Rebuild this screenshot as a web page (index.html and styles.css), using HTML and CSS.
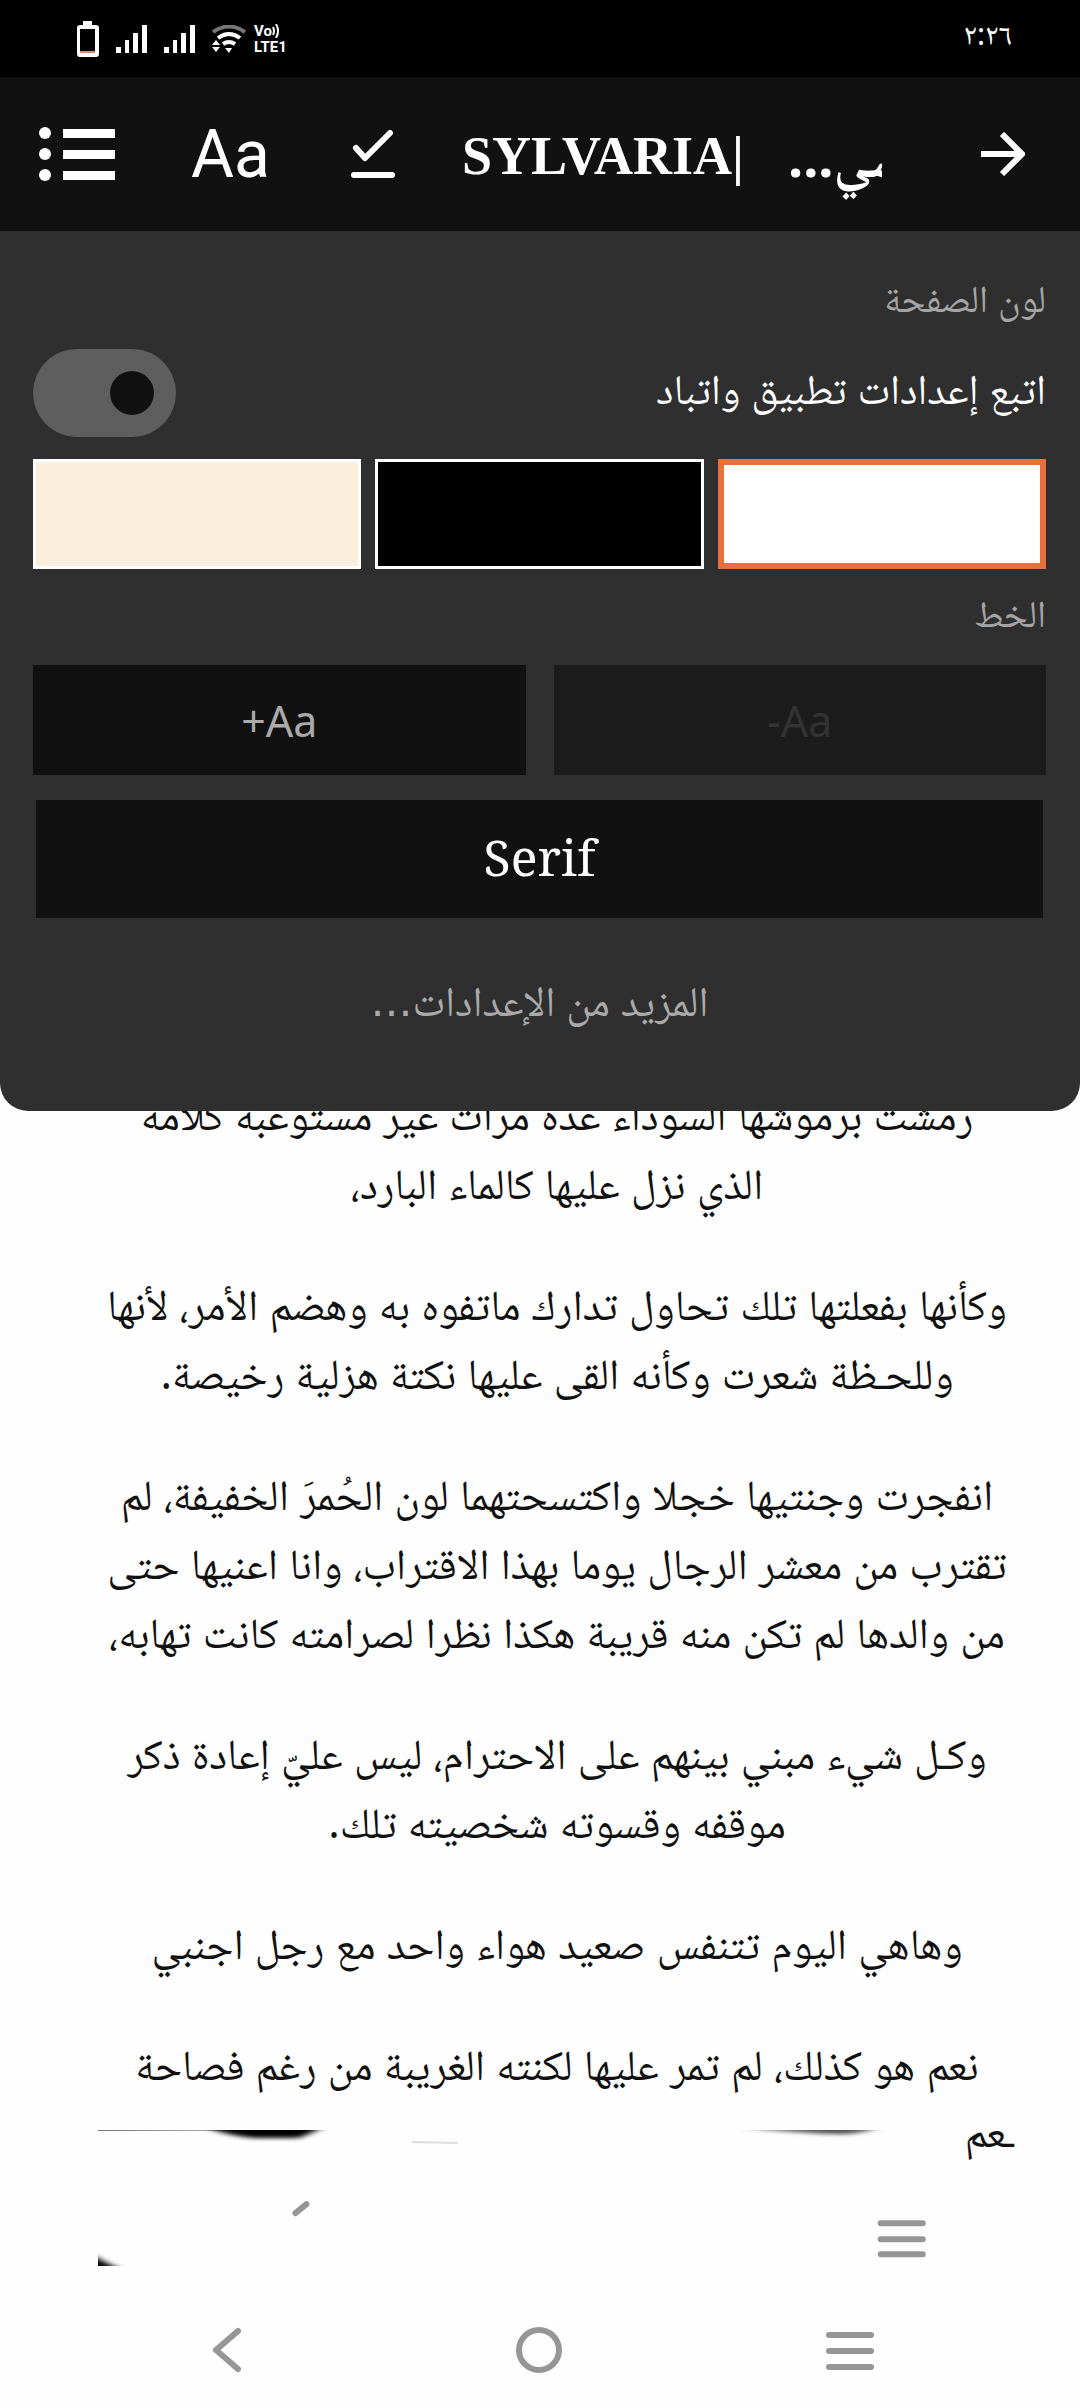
FILE: index.html
```html
<!DOCTYPE html>
<html lang="ar" dir="rtl">
<head>
    <meta charset="UTF-8">
    <meta name="viewport" content="width=device-width, initial-scale=1.0">
    <title>SYLVARIA</title>
    <link rel="stylesheet" href="styles.css">
</head>
<body>
    <div class="status-bar">
        <span class="clock">٢:٢٦</span>
        <div class="status-icons">
            <svg width="22" height="36" viewBox="0 0 22 36"><path d="M6 0h9v4h4q3 0 3 3v26q0 3-3 3H3q-3 0-3-3V7q0-3 3-3h3z" fill="#fff"/><path d="M3 8h15v22H3z" fill="#000"/><path d="M3 30h15v2H3z" fill="#d98a76"/></svg>
            <svg width="31" height="28" viewBox="0 0 31 28" fill="#fff"><path d="M0 22h5v6H0zM9 15h4v13H9zM17 8h5v20h-5zM26 0h5v28h-5z"/></svg>
            <svg width="31" height="28" viewBox="0 0 31 28" fill="#fff"><path d="M0 22h5v6H0zM9 15h4v13H9zM17 8h5v20h-5zM26 0h5v28h-5z"/></svg>
            <svg width="34" height="28" viewBox="0 0 34 28"><path d="M1 7Q17-4 33 7" fill="none" stroke="#777" stroke-width="4"/><path d="M6 13q11-8 22 0M11 19q6-4 12 0" fill="none" stroke="#fff" stroke-width="4"/><path d="M13 23h7l-3 5zM0 20l4-5 4 5zM0 22h8l-4 5z" fill="#fff"/></svg>
            <div class="volte">
                <span>Vo<svg width="8" height="14" viewBox="0 0 8 14"><path d="M1 3q2 4 0 8M4 0q4 7 0 14" fill="none" stroke="#fff" stroke-width="2"/></svg></span>
                <span>LTE1</span>
            </div>
        </div>
    </div>

    <header class="top-bar">
        <button class="icon-btn" aria-label="رجوع">
            <svg width="44" height="44" viewBox="0 0 44 44"><path d="M0 22h41M21 2l20 20-20 20" fill="none" stroke="#fff" stroke-width="6"/></svg>
        </button>
        <h1 class="title"><span class="title-end" dir="ltr"><span dir="rtl">سي...</span></span><span class="title-name" dir="ltr">SYLVARIA|</span></h1>
        <button class="icon-btn" aria-label="تم">
            <svg width="44" height="48" viewBox="0 0 44 48"><path d="M5 18l9 10L39 3M3 45h38" fill="none" stroke="#fff" stroke-width="6" stroke-linecap="round" stroke-linejoin="round"/></svg>
        </button>
        <button class="icon-btn text-btn">Aa</button>
        <button class="icon-btn" aria-label="الفصول">
            <svg width="76" height="54" viewBox="0 0 76 54" fill="#fff"><circle cx="6" cy="6" r="6"/><circle cx="6" cy="27" r="6"/><circle cx="6" cy="48" r="6"/><path d="M24 2h52v9H24zM24 23h52v9H24zM24 44h52v9H24z"/></svg>
        </button>
    </header>

    <section class="settings">
        <h2 class="label">لون الصفحة</h2>
        <div class="follow-row">
            <label for="follow">اتبع إعدادات تطبيق واتباد</label>
            <input class="toggle" type="checkbox" id="follow">
        </div>
        <div class="swatches">
            <input class="swatch white" type="radio" name="color" aria-label="أبيض" checked>
            <input class="swatch black" type="radio" name="color" aria-label="أسود">
            <input class="swatch sepia" type="radio" name="color" aria-label="بني داكن">
        </div>
        <h2 class="label">الخط</h2>
        <div class="sizes">
            <button class="size-btn" dir="ltr" disabled>-Aa</button>
            <button class="size-btn" dir="ltr">+Aa</button>
        </div>
        <button class="font-btn">Serif</button>
        <button class="more-btn">المزيد من الإعدادات<span class="dots">…</span></button>
    </section>

    <main class="story">
        <p>رمشت برموشها السوداء عدة مرات غير مستوعبة كلامه<br>الذي نزل عليها كالماء البارد،</p>
        <p>وكأنها بفعلتها تلك تحاول تدارك ماتفوه به وهضم الأمر، لأنها<br>وللحـظة شعرت وكأنه القى عليها نكتة هزلية رخيصة.</p>
        <p>انفجرت وجنتيها خجلا واكتسحتهما لون الحُمرَ الخفيفة، لم<br>تقترب من معشر الرجال يوما بهذا الاقتراب، وانا اعنيها حتى<br>من والدها لم تكن منه قريبة هكذا نظرا لصرامته كانت تهابه،</p>
        <p>وكـل شيء مبني بينهم على الاحترام، ليس عليّ إعادة ذكر<br>موقفه وقسوته شخصيته تلك.</p>
        <p>وهاهي اليوم تتنفس صعيد هواء واحد مع رجل اجنبي</p>
        <p>نعم هو كذلك، لم تمر عليها لكنته الغريبة من رغم فصاحة</p>
        <div class="last-row">
            <span class="cut-word">ـعم</span>
            <svg class="scene" viewBox="0 0 916 136">
                <defs>
                    <linearGradient id="edge"><stop offset="0" stop-color="#777"/><stop offset="1" stop-color="#bbb"/></linearGradient>
                    <filter id="soft" x="-20%" y="-100%" width="140%" height="300%"><feGaussianBlur stdDeviation="4 2"/></filter>
                </defs>
                <path d="M0 0h150v1H0z" fill="url(#edge)"/>
                <path d="M110-6h120q-18 10-30 14h-44q-24-2-46-10z" fill="#000" filter="url(#soft)"/>
                <path d="M142 0h68q-8 3-16 3h-36q-8 0-16-3z" fill="#000"/>
                <path d="M640-3h140q-20 7-38 7-40-1-102-7z" fill="#444" filter="url(#soft)"/>
                <path d="M313 12l46 1" stroke="#ddd" stroke-width="2"/>
                <path d="M-14 120q20 12 48 24h-48z" fill="#000" filter="url(#soft)"/>
                <path d="M197 83l11-9" stroke="#969696" stroke-width="6" stroke-linecap="round"/>
                <path d="M781 93h42M781 109h42M781 124h42" stroke="#969696" stroke-width="6" stroke-linecap="round"/>
            </svg>
        </div>
    </main>

    <nav class="nav-bar" dir="ltr">
        <button aria-label="رجوع"><svg width="48" height="48" viewBox="0 0 48 48"><path d="M34 5L12 24l22 19"/></svg></button>
        <button aria-label="الرئيسية"><svg width="48" height="48" viewBox="0 0 48 48"><circle cx="24" cy="24" r="20"/></svg></button>
        <button aria-label="التطبيقات"><svg width="48" height="48" viewBox="0 0 48 48"><path d="M3 9h42M3 25h42M3 41h42"/></svg></button>
    </nav>
</body>
</html>
```

FILE: styles.css
```css
* {
    box-sizing: border-box;
}
body {
    margin: 0;
    background-color: #fefefe;
    font-family: "Noto Sans", "Noto Naskh Arabic", "DejaVu Sans", sans-serif;
    color: #111;
}
button {
    padding: 0;
    border: none;
    background: none;
    color: inherit;
    font-family: inherit;
}
svg {
    display: block;
}
.status-bar {
    display: flex;
    justify-content: space-between;
    align-items: center;
    height: 77px;
    padding: 0 68px 0 77px;
    background-color: #000;
    color: #fff;
}
.clock {
    font-size: 30px;
}
.status-icons {
    display: flex;
    flex-direction: row-reverse;
    align-items: center;
    gap: 17px;
}
.volte {
    display: flex;
    flex-direction: column;
    direction: ltr;
    margin-left: -9px;
    font-family: Roboto, sans-serif;
    font-size: 15px;
    font-weight: bold;
    line-height: 16px;
}
.volte svg {
    display: inline-block;
    vertical-align: -2px;
}
.top-bar {
    display: flex;
    align-items: center;
    height: 154px;
    padding: 0 55px 0 39px;
    background-color: #111;
    color: #fff;
}
.title {
    display: flex;
    flex: 1;
    justify-content: space-between;
    align-items: center;
    margin: 0 99px 0 67px;
    padding-top: 4px;
    font-size: 54px;
    line-height: 110px;
    white-space: nowrap;
}
.title-name {
    font-family: "Liberation Serif", serif;
}
.title-end {
    width: 94px;
    overflow: hidden;
}
.text-btn {
    margin: 0 81px 0 76px;
    font-family: Roboto, sans-serif;
    font-size: 66px;
}
.settings {
    position: relative;
    display: flex;
    flex-direction: column;
    height: 880px;
    padding: 42px 34px 0 33px;
    border-radius: 0 0 28px 28px;
    background-color: #2f2f2f;
}
.label {
    margin: 0;
    font-size: 38px;
    font-weight: normal;
    line-height: 48px;
    color: #a5a5a5;
}
.follow-row {
    display: flex;
    justify-content: space-between;
    align-items: center;
    margin: 28px 0 22px;
    font-size: 42px;
    line-height: 60px;
    color: #fff;
}
.follow-row label {
    padding-bottom: 10px;
}
.toggle {
    appearance: none;
    width: 143px;
    height: 88px;
    margin: 0;
    padding: 22px;
    border-radius: 44px;
    background-color: #5e5e5e;
}
.toggle::before {
    content: "";
    display: block;
    width: 44px;
    height: 44px;
    border-radius: 50%;
    background-color: #111;
}
.swatches {
    display: grid;
    grid-template-columns: repeat(3, 1fr);
    gap: 14px;
    margin-bottom: 19px;
}
.swatch {
    appearance: none;
    height: 110px;
    margin: 0;
    border: 3px solid #fff;
}
.swatch:checked {
    border: 6px solid #e6703e;
}
.white {
    background-color: #fff;
}
.black {
    background-color: #000;
}
.sepia {
    background-color: #faefdc;
}
.sizes {
    display: grid;
    grid-template-columns: 1fr 1fr;
    gap: 28px;
    margin: 29px 0 25px;
}
.size-btn {
    height: 110px;
    background-color: #111;
    font-size: 43px;
    color: #aaa;
}
.size-btn:disabled {
    background-color: #1c1c1c;
    color: #333;
}
.font-btn {
    height: 118px;
    margin: 0 3px;
    padding-bottom: 4px;
    background-color: #111;
    font-family: "Noto Serif", "DejaVu Serif", serif;
    font-size: 50px;
    color: #fff;
}
.more-btn {
    margin-top: 52px;
    font-size: 42px;
    line-height: 60px;
    color: #aaa;
}
.dots {
    font-family: "DejaVu Sans", sans-serif;
}
.story {
    margin-top: -32px;
    padding: 0 64px 0 98px;
    font-size: 43px;
    line-height: 69px;
    text-align: center;
    white-space: nowrap;
}
.story p {
    margin: 0 0 52px;
}
.last-row {
    position: relative;
    margin-top: -20px;
}
.cut-word {
    position: absolute;
    top: -34px;
    right: 0;
}
.scene {
    width: 100%;
}
.nav-bar {
    display: grid;
    grid-template-columns: repeat(3, 1fr);
    justify-items: center;
    margin-top: 60px;
    padding: 0 74px 31px 72px;
}
.nav-bar svg {
    fill: none;
    stroke: #969696;
    stroke-width: 6;
    stroke-linecap: round;
    stroke-linejoin: round;
}
```
